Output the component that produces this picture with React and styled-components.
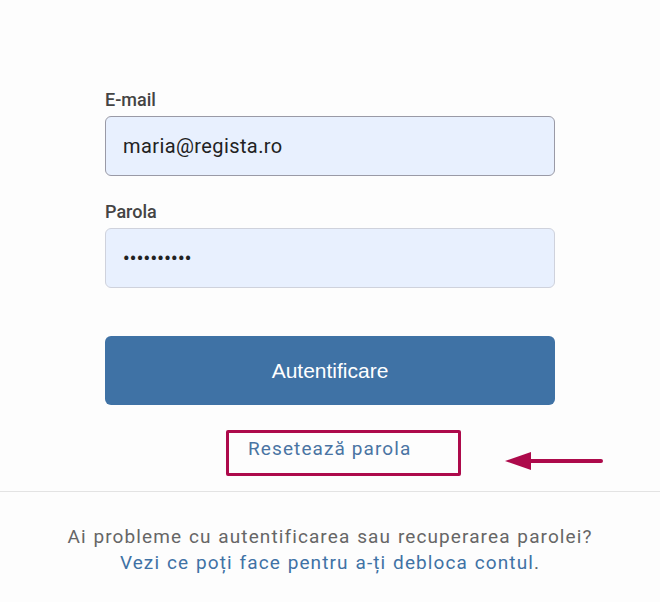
import React from "react";
import styled, { createGlobalStyle } from "styled-components";

const GlobalStyle = createGlobalStyle`
  html, body {
    margin: 0;
    padding: 0;
    background: #fdfdfd;
  }
  body {
    font-family: Roboto, "Liberation Sans", sans-serif;
  }
  * { box-sizing: border-box; }
`;

const Page = styled.div`
  width: 660px;
  height: 602px;
  display: flex;
  flex-direction: column;
  background: #fdfdfd;
`;

const Form = styled.form`
  display: flex;
  flex-direction: column;
  padding: 88px 105px 0;
`;

const Label = styled.label`
  font-size: 18px;
  font-weight: 500;
  color: #444;
  line-height: 23px;
  margin-bottom: 5px;
`;

const Field = styled.div`
  height: 60px;
  border: 1px solid ${(p) => (p.$focused ? "#9a9aa6" : "#cfd2dc")};
  border-radius: 6px;
  background: #e8f0fe;
  display: flex;
  align-items: center;
  padding: 0 17px;
  font-size: ${(p) => (p.$secret ? "18px" : "20px")};
  color: #222;
  margin-bottom: 24px;
  letter-spacing: ${(p) => (p.$secret ? "0.4px" : "0.4px")};
  font-weight: ${(p) => (p.$secret ? 700 : 400)};
`;

const Submit = styled.button`
  margin-top: 24px;
  height: 69px;
  border: none;
  border-radius: 6px;
  background: #3f72a5;
  color: #fff;
  font-family: "Liberation Sans", Arial, sans-serif;
  font-size: 21px;
  cursor: pointer;
`;

const ResetRow = styled.div`
  position: relative;
  display: flex;
  margin-top: 25px;
  padding-left: 121px;
  height: 46px;
`;

const ResetBox = styled.a`
  width: 235px;
  height: 46px;
  border: 3px solid #ad0a4b;
  border-radius: 2px;
  padding: 4px 0 0 19px;
  color: #4a74a3;
  font-size: 19px;
  letter-spacing: 1.1px;
  text-decoration: none;
`;

const Arrow = styled.svg`
  position: absolute;
  left: 400px;
  top: 21px;
`;

const Divider = styled.hr`
  margin: 15px 0 0;
  border: none;
  border-top: 1px solid #e3e3e3;
`;

const Help = styled.div`
  padding-top: 32px;
  text-align: center;
  font-size: 19px;
  line-height: 26px;
  letter-spacing: 1.1px;
  word-spacing: 1px;
  color: #666;
`;

const HelpLink = styled.a`
  color: #3f72a5;
  text-decoration: none;
`;

export default function App() {
  return (
    <Page>
      <GlobalStyle />
      <Form onSubmit={(e) => e.preventDefault()}>
        <Label>E-mail</Label>
        <Field $focused>maria@regista.ro</Field>
        <Label>Parola</Label>
        <Field $secret>••••••••••</Field>
        <Submit type="submit">Autentificare</Submit>
        <ResetRow>
          <ResetBox href="#">Resetează parola</ResetBox>
          <Arrow width="100" height="20" viewBox="0 0 100 20">
            <line x1="22" y1="10" x2="96" y2="10" stroke="#ad0a4b" strokeWidth="4" strokeLinecap="round" />
            <polygon points="0,10 26,1 26,19" fill="#ad0a4b" />
          </Arrow>
        </ResetRow>
      </Form>
      <Divider />
      <Help>
        Ai probleme cu autentificarea sau recuperarea parolei?
        <br />
        <HelpLink href="#">Vezi ce poți face pentru a-ți debloca contul</HelpLink>.
      </Help>
    </Page>
  );
}
